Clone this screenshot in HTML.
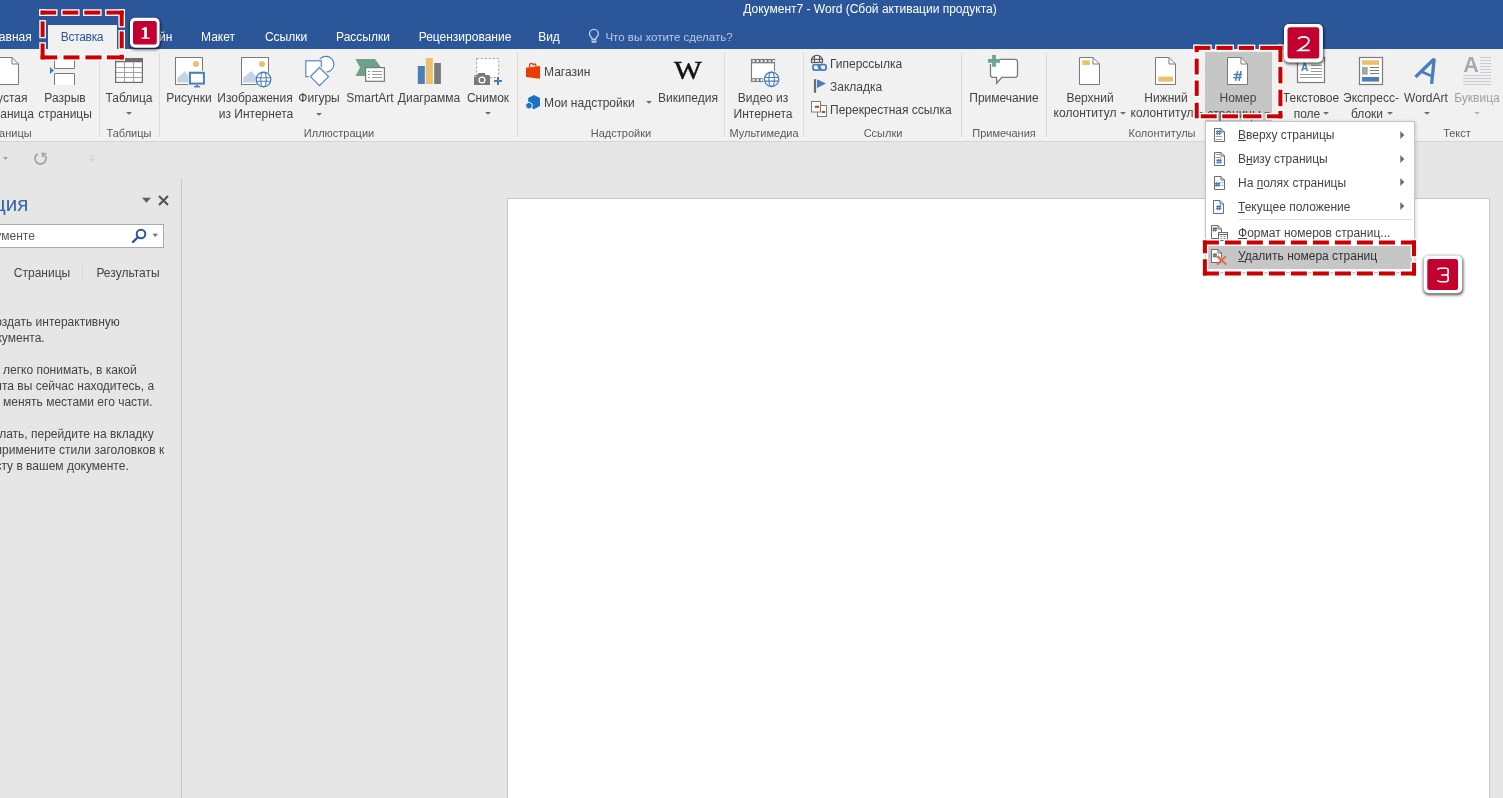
<!DOCTYPE html><html><head><meta charset="utf-8"><style>
html,body{margin:0;padding:0}
body{width:1503px;height:798px;overflow:hidden;position:relative;background:#E6E6E6;font-family:"Liberation Sans", sans-serif}
.t{position:absolute;white-space:nowrap;line-height:16px;will-change:transform}
.i{position:absolute;overflow:visible}
.r{position:absolute}
u{text-decoration:underline;text-decoration-thickness:1px;text-underline-offset:0.5px}
</style></head><body>
<div class="r" style="left:0px;top:0px;width:1503px;height:49px;background:#2B579A;"></div>
<div class="t" style="top:0.84px;font-size:12px;color:#FFFFFF;left:720.20px;width:300px;text-align:center;">Документ7 - Word (Сбой активации продукта)</div>
<div class="r" style="left:48px;top:25px;width:69px;height:24px;background:#F1F1F1;"></div>
<div class="t" style="top:28.84px;font-size:12px;color:#FFFFFF;right:1471.00px;">Главная</div>
<div class="t" style="top:28.84px;font-size:12px;color:#2B579A;left:-67.75px;width:300px;text-align:center;letter-spacing:-0.3px;">Вставка</div>
<div class="t" style="top:28.84px;font-size:12px;color:#FFFFFF;right:1330.70px;">Дизайн</div>
<div class="t" style="top:28.84px;font-size:12px;color:#FFFFFF;left:68.10px;width:300px;text-align:center;">Макет</div>
<div class="t" style="top:28.84px;font-size:12px;color:#FFFFFF;left:135.60px;width:300px;text-align:center;">Ссылки</div>
<div class="t" style="top:28.84px;font-size:12px;color:#FFFFFF;left:212.85px;width:300px;text-align:center;">Рассылки</div>
<div class="t" style="top:28.84px;font-size:12px;color:#FFFFFF;left:314.70px;width:300px;text-align:center;">Рецензирование</div>
<div class="t" style="top:28.84px;font-size:12px;color:#FFFFFF;left:399.25px;width:300px;text-align:center;">Вид</div>
<div class="t" style="top:29.02px;font-size:11.5px;color:#B9C8E0;left:518.70px;width:300px;text-align:center;">Что вы хотите сделать?</div>
<svg class="i" style="left:586px;top:28px;" width="16" height="16" viewBox="0 0 16 16"><path d="M6.2,11.3 C5.8,9.3 3.4,7.9 3.4,5.9 A4.5,4.5 0 0 1 12.4,5.9 C12.4,7.9 10,9.3 9.6,11.3 Z" fill="none" stroke="#B9C8E0" stroke-width="1.4"/><path d="M5.2,12.4 H10.8 L10.2,14.8 H5.8 Z" fill="#B9C8E0"/></svg>
<div class="r" style="left:0px;top:49px;width:1503px;height:92px;background:#F1F1F1;"></div>
<div class="r" style="left:0px;top:141px;width:1503px;height:1px;background:#D5D5D5;"></div>
<div class="r" style="left:99px;top:53px;width:1px;height:84px;background:#DADADA;"></div>
<div class="r" style="left:159px;top:53px;width:1px;height:84px;background:#DADADA;"></div>
<div class="r" style="left:517px;top:53px;width:1px;height:84px;background:#DADADA;"></div>
<div class="r" style="left:724px;top:53px;width:1px;height:84px;background:#DADADA;"></div>
<div class="r" style="left:803px;top:53px;width:1px;height:84px;background:#DADADA;"></div>
<div class="r" style="left:961px;top:53px;width:1px;height:84px;background:#DADADA;"></div>
<div class="r" style="left:1046px;top:53px;width:1px;height:84px;background:#DADADA;"></div>
<svg class="i" style="left:-6px;top:56px;" width="27" height="31" viewBox="0 0 27 31"><path d="M1.5,1.5 H18 L24.5,8 V28.5 H1.5 Z" fill="#fff" stroke="#7A7A7A"/><path d="M18,1.5 V8 H24.5" fill="none" stroke="#7A7A7A"/></svg>
<div class="t" style="top:89.84px;font-size:12px;color:#444444;left:-142.40px;width:300px;text-align:center;">Пустая</div>
<div class="t" style="top:105.84px;font-size:12px;color:#444444;left:-142.40px;width:300px;text-align:center;">страница</div>
<svg class="i" style="left:49px;top:52px;" width="28" height="35" viewBox="0 0 28 35"><path d="M5.5,7 V16.5 H25.5 V7" fill="#fff" stroke="#7A7A7A"/><path d="M5.5,33 V21.5 H25.5 V33" fill="#fff" stroke="#7A7A7A"/><path d="M0.9,14.9 L5.1,18.4 L0.9,21.9 Z" fill="#4A7EBB"/></svg>
<div class="t" style="top:89.84px;font-size:12px;color:#444444;left:-84.90px;width:300px;text-align:center;">Разрыв</div>
<div class="t" style="top:105.84px;font-size:12px;color:#444444;left:-84.90px;width:300px;text-align:center;">страницы</div>
<div class="t" style="top:125.19px;font-size:11px;color:#5A5A5A;right:1470.90px;">Страницы</div>
<svg class="i" style="left:115px;top:58px;" width="28" height="25" viewBox="0 0 28 25"><rect x="0.6" y="0.6" width="26.8" height="23.8" fill="#fff" stroke="#6D6D6D" stroke-width="1.2"/><rect x="0" y="0" width="28" height="4.3" fill="#6D6D6D"/><path d="M1,9.5 H27" stroke="#A3A3A3" stroke-width="1.1"/><path d="M1,14.5 H27" stroke="#A3A3A3" stroke-width="1.1"/><path d="M1,19.5 H27" stroke="#A3A3A3" stroke-width="1.1"/><path d="M9.5,4.3 V24" stroke="#A3A3A3" stroke-width="1.1"/><path d="M18.5,4.3 V24" stroke="#A3A3A3" stroke-width="1.1"/></svg>
<div class="t" style="top:89.84px;font-size:12px;color:#444444;left:-20.90px;width:300px;text-align:center;">Таблица</div>
<svg class="i" style="left:126.30000000000001px;top:112.0px;" width="6" height="4" viewBox="0 0 6 4"><path d="M0,0 L6,0 L3,2.70 Z" fill="#6D6D6D"/></svg>
<div class="t" style="top:125.19px;font-size:11px;color:#5A5A5A;left:-20.60px;width:300px;text-align:center;">Таблицы</div>
<svg class="i" style="left:175px;top:57px;" width="32" height="31" viewBox="0 0 32 31"><rect x="0.5" y="0.5" width="27" height="27" fill="#fff" stroke="#7A7A7A"/><path d="M2.2,25.6 V21.1 L10.1,14.1 L13,19 V25.6 Z" fill="#C3D4E8"/><circle cx="21" cy="6.9" r="3" fill="#EBC06D"/><rect x="13" y="13.8" width="18" height="15" fill="#F1F1F1"/><rect x="14.9" y="15.8" width="14" height="10.8" fill="#fff" stroke="#4A7EBB" stroke-width="2"/><rect x="19" y="29" width="6" height="1.4" fill="#4A7EBB"/><rect x="21" y="27.8" width="2" height="1.4" fill="#4A7EBB"/></svg>
<div class="t" style="top:89.84px;font-size:12px;color:#444444;left:39.05px;width:300px;text-align:center;">Рисунки</div>
<svg class="i" style="left:241px;top:57px;" width="34" height="32" viewBox="0 0 34 32"><rect x="0.5" y="0.5" width="27" height="27" fill="#fff" stroke="#7A7A7A"/><path d="M2.2,25.6 V21.1 L10.1,14.1 L15,19 V25.6 Z" fill="#C3D4E8"/><circle cx="21" cy="6.9" r="3" fill="#EBC06D"/><circle cx="22.5" cy="22.5" r="8.50" fill="#F1F1F1"/><circle cx="22.5" cy="22.5" r="7.3" fill="#fff" stroke="#4A7EBB" stroke-width="1.3"/><ellipse cx="22.5" cy="22.5" rx="2.77" ry="7.3" fill="none" stroke="#4A7EBB" stroke-width="1.1"/><path d="M15.2,20.68 H29.8 M15.2,24.32 H29.8" stroke="#4A7EBB" stroke-width="1.1"/></svg>
<div class="t" style="top:89.84px;font-size:12px;color:#444444;left:105.00px;width:300px;text-align:center;">Изображения</div>
<div class="t" style="top:105.84px;font-size:12px;color:#444444;left:105.60px;width:300px;text-align:center;">из Интернета</div>
<svg class="i" style="left:304px;top:55px;" width="32" height="34" viewBox="0 0 32 34"><circle cx="22" cy="9.3" r="7.9" fill="#fff" stroke="#4A7EBB" stroke-width="1.1"/><rect x="1.8" y="5.8" width="15.4" height="15.8" fill="#fff" stroke="#F1F1F1" stroke-width="3.2"/><rect x="1.8" y="5.8" width="15.4" height="15.8" fill="#fff" stroke="#4A7EBB" stroke-width="1.1"/><path d="M15.5,12.6 L24.5,21.6 L15.5,30.6 L6.5,21.6 Z" fill="#fff" stroke="#F1F1F1" stroke-width="3.2"/><path d="M15.5,12.6 L24.5,21.6 L15.5,30.6 L6.5,21.6 Z" fill="#fff" stroke="#4A7EBB" stroke-width="1.1"/></svg>
<div class="t" style="top:89.84px;font-size:12px;color:#444444;left:169.45px;width:300px;text-align:center;">Фигуры</div>
<svg class="i" style="left:316.3px;top:112.5px;" width="6" height="4" viewBox="0 0 6 4"><path d="M0,0 L6,0 L3,2.70 Z" fill="#6D6D6D"/></svg>
<svg class="i" style="left:355px;top:58px;" width="31" height="25" viewBox="0 0 31 25"><path d="M0.5,1 H20 L25.5,8.5 V18 H0.5 L5,9.5 Z" fill="#6DA28A"/><rect x="10.6" y="9.6" width="18.8" height="13.7" fill="#fff" stroke="#7A7A7A" stroke-width="1.2"/><path d="M13,13.5 h2 M17,13.5 h10 M13,16.5 h2 M17,16.5 h10 M13,19.5 h2 M17,19.5 h10" stroke="#9A9A9A" stroke-width="1"/></svg>
<div class="t" style="top:89.84px;font-size:12px;color:#444444;left:219.50px;width:300px;text-align:center;">SmartArt</div>
<svg class="i" style="left:417px;top:57px;" width="25" height="28" viewBox="0 0 25 28"><rect x="0.8" y="9" width="7" height="18" fill="#4A7EBB"/><rect x="8.8" y="1" width="7" height="26" fill="#EBC06D"/><rect x="17.2" y="6" width="6.7" height="21" fill="#7A7A7A"/></svg>
<div class="t" style="top:89.84px;font-size:12px;color:#444444;left:279.35px;width:300px;text-align:center;">Диаграмма</div>
<svg class="i" style="left:473px;top:57px;" width="31" height="29" viewBox="0 0 31 29"><rect x="3.7" y="1.5" width="22" height="19" fill="#fff" stroke="#A0A0A0" stroke-dasharray="2.2,1.8"/><path d="M1,19.5 Q1,18 2.5,18 H4.5 L5.3,16 H11.7 L12.5,18 H15.5 Q17,18 17,19.5 V28 H1 Z" fill="#7A7A7A"/><circle cx="9" cy="23" r="2.9" fill="none" stroke="#fff" stroke-width="1.3"/><circle cx="2.6" cy="19.6" r="0.7" fill="#fff"/><path d="M21,24 H29 M25,20 V28" stroke="#4A7EBB" stroke-width="2"/></svg>
<div class="t" style="top:89.84px;font-size:12px;color:#444444;left:338.35px;width:300px;text-align:center;">Снимок</div>
<svg class="i" style="left:485.4px;top:111.5px;" width="6" height="4" viewBox="0 0 6 4"><path d="M0,0 L6,0 L3,2.70 Z" fill="#6D6D6D"/></svg>
<div class="t" style="top:125.19px;font-size:11px;color:#5A5A5A;left:188.50px;width:300px;text-align:center;">Иллюстрации</div>
<svg class="i" style="left:525px;top:62px;" width="17" height="18" viewBox="0 0 17 18"><path d="M1,5.8 L15,4 V16.7 L1,15 Z" fill="#EB3C00"/><path d="M4.6,5.4 V3.2 Q4.6,1.3 6.4,1.3 Q8.1,1.3 8.1,3.2 Q8.1,2 9.5,2 Q10.9,2 10.9,3.8 V4.8" fill="none" stroke="#EB3C00" stroke-width="1.3"/></svg>
<div class="t" style="top:63.84px;font-size:12px;color:#444444;left:544.10px;">Магазин</div>
<svg class="i" style="left:525px;top:94px;" width="17" height="17" viewBox="0 0 17 17"><path d="M3.2,4 L9,0.9 L15,4 V12 L9,15.2 L3.2,12 Z" fill="#1B72C4"/><path d="M4,8.1 L7.2,9.9 V13.4 L4,15.2 L0.8,13.4 V9.9 Z" fill="#1B72C4" stroke="#F1F1F1" stroke-width="1"/></svg>
<div class="t" style="top:94.84px;font-size:12px;color:#444444;left:544.10px;">Мои надстройки</div>
<svg class="i" style="left:645.5px;top:100.5px;" width="6" height="4" viewBox="0 0 6 4"><path d="M0,0 L6,0 L3,2.70 Z" fill="#6D6D6D"/></svg>
<div class="t" style="left:674px;top:55.5px;font-family:'Liberation Serif',serif;font-size:26px;line-height:30px;color:#111;-webkit-text-stroke:0.5px #111;transform:scaleX(1.13);transform-origin:0 0">W</div>
<div class="t" style="top:89.84px;font-size:12px;color:#444444;left:537.65px;width:300px;text-align:center;">Википедия</div>
<div class="t" style="top:125.19px;font-size:11px;color:#5A5A5A;left:471.15px;width:300px;text-align:center;">Надстройки</div>
<svg class="i" style="left:750px;top:57px;" width="34" height="33" viewBox="0 0 34 33"><rect x="1.5" y="2.5" width="23" height="22" fill="#fff" stroke="#7A7A7A" stroke-width="1.1"/><rect x="1" y="2" width="24" height="4.3" fill="#7A7A7A"/><rect x="1" y="21.2" width="24" height="3.8" fill="#7A7A7A"/><rect x="2.6" y="3.1" width="2" height="2" fill="#fff"/><rect x="2.6" y="22.1" width="2" height="2" fill="#fff"/><rect x="6.6" y="3.1" width="2" height="2" fill="#fff"/><rect x="6.6" y="22.1" width="2" height="2" fill="#fff"/><rect x="10.6" y="3.1" width="2" height="2" fill="#fff"/><rect x="10.6" y="22.1" width="2" height="2" fill="#fff"/><rect x="14.6" y="3.1" width="2" height="2" fill="#fff"/><rect x="14.6" y="22.1" width="2" height="2" fill="#fff"/><rect x="18.6" y="3.1" width="2" height="2" fill="#fff"/><rect x="18.6" y="22.1" width="2" height="2" fill="#fff"/><rect x="22.6" y="3.1" width="2" height="2" fill="#fff"/><rect x="22.6" y="22.1" width="2" height="2" fill="#fff"/><circle cx="21.6" cy="22.3" r="8.6" fill="#F1F1F1"/><circle cx="21.6" cy="22.3" r="8.40" fill="#F1F1F1"/><circle cx="21.6" cy="22.3" r="7.2" fill="#fff" stroke="#4A7EBB" stroke-width="1.3"/><ellipse cx="21.6" cy="22.3" rx="2.74" ry="7.2" fill="none" stroke="#4A7EBB" stroke-width="1.1"/><path d="M14.400000000000002,20.50 H28.8 M14.400000000000002,24.10 H28.8" stroke="#4A7EBB" stroke-width="1.1"/></svg>
<div class="t" style="top:89.84px;font-size:12px;color:#444444;left:613.15px;width:300px;text-align:center;">Видео из</div>
<div class="t" style="top:105.84px;font-size:12px;color:#444444;left:612.95px;width:300px;text-align:center;">Интернета</div>
<div class="t" style="top:125.19px;font-size:11px;color:#5A5A5A;left:614.15px;width:300px;text-align:center;">Мультимедиа</div>
<svg class="i" style="left:810px;top:54px;" width="19" height="19" viewBox="0 0 19 19"><circle cx="7" cy="6.9" r="5.6" fill="#fff" stroke="#5F5F5F" stroke-width="1.3"/><path d="M4.5,1.8 V9.5 M9.5,1.8 V9.5 M1.6,5.3 H12.4 M1.4,8.3 H12.6" stroke="#5F5F5F" stroke-width="1.2"/><rect x="0.8" y="9.3" width="17.5" height="9" fill="#F1F1F1"/><rect x="2.9" y="10.7" width="6.9" height="5.4" rx="2" fill="none" stroke="#4A7EBB" stroke-width="1.8"/><rect x="9.2" y="10.7" width="6.9" height="5.4" rx="2" fill="none" stroke="#4A7EBB" stroke-width="1.8"/><path d="M7.5,11.5 L11.5,15.3" stroke="#4A7EBB" stroke-width="1.8"/></svg>
<div class="t" style="top:55.84px;font-size:12px;color:#444444;left:830.00px;">Гиперссылка</div>
<svg class="i" style="left:812px;top:78px;" width="16" height="16" viewBox="0 0 16 16"><rect x="1.9" y="1.2" width="2.2" height="13.6" fill="#6D6D6D"/><path d="M5,1.2 L14,5.6 L5,10 Z" fill="#4A7EBB"/></svg>
<div class="t" style="top:78.84px;font-size:12px;color:#444444;left:830.00px;">Закладка</div>
<svg class="i" style="left:810px;top:100px;" width="18" height="18" viewBox="0 0 18 18"><rect x="7.5" y="5.5" width="9" height="11" fill="#fff" stroke="#7A7A7A"/><rect x="1.5" y="1.5" width="9" height="10.5" fill="#fff" stroke="#7A7A7A"/><rect x="4.8" y="5.8" width="4.2" height="2" fill="#D83B01"/><rect x="11.8" y="11" width="3.3" height="2" fill="#D83B01"/></svg>
<div class="t" style="top:101.84px;font-size:12px;color:#444444;left:830.00px;">Перекрестная ссылка</div>
<div class="t" style="top:125.19px;font-size:11px;color:#5A5A5A;left:732.70px;width:300px;text-align:center;">Ссылки</div>
<svg class="i" style="left:986px;top:54px;" width="34" height="31" viewBox="0 0 34 31"><path d="M4.5,9 V20.8 Q4.5,23.3 7,23.3 H10.6 V29.3 L15.9,23.3 H29 Q31.5,23.3 31.5,20.8 V7.8 Q31.5,5.3 29,5.3 H13" fill="#fff" stroke="#7A7A7A" stroke-width="1.3"/><path d="M2,6.9 H14 M8,1 V12.8" stroke="#F1F1F1" stroke-width="6"/><path d="M2,6.9 H14 M8,1 V12.8" stroke="#6DA592" stroke-width="3.8"/></svg>
<div class="t" style="top:89.84px;font-size:12px;color:#444444;left:853.80px;width:300px;text-align:center;">Примечание</div>
<div class="t" style="top:125.19px;font-size:11px;color:#5A5A5A;left:853.50px;width:300px;text-align:center;">Примечания</div>
<svg class="i" style="left:1079px;top:57px;" width="21" height="28" viewBox="0 0 21 28"><path d="M0.5,0.5 H14.0 L20.5,7.0 V27.5 H0.5 Z" fill="#fff" stroke="#7A7A7A"/><path d="M14.0,0.5 V7.0 H20.5" fill="none" stroke="#7A7A7A"/><rect x="3.3" y="3.3" width="7.5" height="4.7" fill="#EBC06D"/></svg>
<div class="t" style="top:89.84px;font-size:12px;color:#444444;left:939.60px;width:300px;text-align:center;">Верхний</div>
<div class="t" style="top:104.84px;font-size:12px;color:#444444;left:935.10px;width:300px;text-align:center;">колонтитул</div>
<svg class="i" style="left:1119.7px;top:112.0px;" width="6" height="4" viewBox="0 0 6 4"><path d="M0,0 L6,0 L3,2.70 Z" fill="#6D6D6D"/></svg>
<svg class="i" style="left:1155px;top:57px;" width="21" height="28" viewBox="0 0 21 28"><path d="M0.5,0.5 H14.0 L20.5,7.0 V27.5 H0.5 Z" fill="#fff" stroke="#7A7A7A"/><path d="M14.0,0.5 V7.0 H20.5" fill="none" stroke="#7A7A7A"/><rect x="3.3" y="19.6" width="14.7" height="5" fill="#EBC06D"/></svg>
<div class="t" style="top:89.84px;font-size:12px;color:#444444;left:1016.10px;width:300px;text-align:center;">Нижний</div>
<div class="t" style="top:104.84px;font-size:12px;color:#444444;left:1012.10px;width:300px;text-align:center;">колонтитул</div>
<svg class="i" style="left:1196.5px;top:112.0px;" width="6" height="4" viewBox="0 0 6 4"><path d="M0,0 L6,0 L3,2.70 Z" fill="#6D6D6D"/></svg>
<div class="t" style="top:125.19px;font-size:11px;color:#5A5A5A;left:1011.85px;width:300px;text-align:center;">Колонтитулы</div>
<div class="r" style="left:1205px;top:52px;width:67px;height:69px;background:#C6C6C6;"></div>
<svg class="i" style="left:1227px;top:57px;" width="21" height="28" viewBox="0 0 21 28"><path d="M0.5,0.5 H14.0 L20.5,7.0 V27.5 H0.5 Z" fill="#fff" stroke="#7A7A7A"/><path d="M14.0,0.5 V7.0 H20.5" fill="none" stroke="#7A7A7A"/><path d="M10.6,14 L8.6,23.8 M14,14 L12,23.8 M6.6,17.4 H15 M6.2,20.6 H14.6" stroke="#4A7EBB" stroke-width="1.45" fill="none"/></svg>
<div class="t" style="top:89.84px;font-size:12px;color:#444444;left:1087.90px;width:300px;text-align:center;">Номер</div>
<div class="t" style="top:105.84px;font-size:12px;color:#444444;left:1084.00px;width:300px;text-align:center;">страницы</div>
<svg class="i" style="left:1264px;top:112.0px;" width="6" height="4" viewBox="0 0 6 4"><path d="M0,0 L6,0 L3,2.70 Z" fill="#6D6D6D"/></svg>
<svg class="i" style="left:1297px;top:57px;" width="28" height="26" viewBox="0 0 28 26"><rect x="0.5" y="0.5" width="27" height="25" fill="#fff" stroke="#7A7A7A" stroke-width="1.2"/><text x="3.8" y="13.9" font-family="Liberation Sans" font-weight="bold" font-size="10.5" fill="#4A7EBB">A</text><path d="M14,8.4 H25 M14,11.5 H25 M14,14.5 H25 M3,17.5 H25 M3,20.5 H25" stroke="#9A9A9A" stroke-width="1.2"/></svg>
<div class="t" style="top:89.84px;font-size:12px;color:#444444;left:1160.90px;width:300px;text-align:center;">Текстовое</div>
<div class="t" style="top:105.84px;font-size:12px;color:#444444;left:1156.65px;width:300px;text-align:center;">поле</div>
<svg class="i" style="left:1322.5px;top:112.0px;" width="6" height="4" viewBox="0 0 6 4"><path d="M0,0 L6,0 L3,2.70 Z" fill="#6D6D6D"/></svg>
<svg class="i" style="left:1359px;top:57px;" width="24" height="28" viewBox="0 0 24 28"><rect x="0.5" y="0.5" width="23" height="27" fill="#fff" stroke="#7A7A7A" stroke-width="1.2"/><rect x="3" y="3.2" width="17" height="4.6" fill="#EBC06D"/><rect x="3" y="10" width="5.7" height="7.7" fill="#A6A6A6"/><path d="M11,10.5 H20 M11,13.5 H20 M11,16.5 H20" stroke="#7A7A7A"/><rect x="3" y="20" width="17" height="4.6" fill="#4A7EBB"/></svg>
<div class="t" style="top:89.84px;font-size:12px;color:#444444;left:1220.70px;width:300px;text-align:center;">Экспресс-</div>
<div class="t" style="top:105.84px;font-size:12px;color:#444444;left:1217.00px;width:300px;text-align:center;">блоки</div>
<svg class="i" style="left:1386.5px;top:112.0px;" width="6" height="4" viewBox="0 0 6 4"><path d="M0,0 L6,0 L3,2.70 Z" fill="#6D6D6D"/></svg>
<svg class="i" style="left:1413px;top:57px;" width="24" height="28" viewBox="0 0 24 28"><path d="M2.5,20 L20,3 L21.2,2.2 L18.6,26.8" fill="none" stroke="#4A7EBB" stroke-width="3.3" stroke-linejoin="bevel"/><path d="M9.3,14.9 L19.2,19.3" stroke="#4A7EBB" stroke-width="2.7"/></svg>
<div class="t" style="top:89.84px;font-size:12px;color:#444444;left:1276.35px;width:300px;text-align:center;">WordArt</div>
<svg class="i" style="left:1423.5px;top:112.0px;" width="6" height="4" viewBox="0 0 6 4"><path d="M0,0 L6,0 L3,2.70 Z" fill="#6D6D6D"/></svg>
<svg class="i" style="left:1462px;top:56px;" width="30" height="30" viewBox="0 0 30 30"><text x="1.2" y="16" font-family="Liberation Sans" font-weight="bold" font-size="21.5" fill="#A9A9AC">A</text><path d="M18,1.5 H29 M18,4.5 H29 M18,7.5 H29 M18,10.5 H29 M18,13.5 H29 M18,16.5 H29 M1,19.5 H29 M1,22.5 H29 M1,25.5 H29 M1,28.5 H29" stroke="#CBCACD"/></svg>
<div class="t" style="top:89.84px;font-size:12px;color:#A0A0A0;left:1326.55px;width:300px;text-align:center;">Буквица</div>
<svg class="i" style="left:1473.5px;top:112.0px;" width="6" height="4" viewBox="0 0 6 4"><path d="M0,0 L6,0 L3,2.70 Z" fill="#B5B5B5"/></svg>
<div class="t" style="top:125.19px;font-size:11px;color:#5A5A5A;left:1307.00px;width:300px;text-align:center;">Текст</div>
<svg class="i" style="left:3px;top:157px;" width="6" height="4" viewBox="0 0 6 4"><path d="M0,0 H5 L2.5,3 Z" fill="#A0A0A0"/></svg>
<svg class="i" style="left:33px;top:151px;" width="16" height="16" viewBox="0 0 16 16"><path d="M4.75,2.74 A5.5,5.5 0 1 0 12.26,4.75" fill="none" stroke="#A6A6A6" stroke-width="1.9"/><path d="M8.1,1.2 L14,2.2 L9.5,6.7 Z" fill="#A6A6A6"/></svg>
<svg class="i" style="left:88px;top:155px;" width="8" height="8" viewBox="0 0 8 8"><path d="M1,1 H7" stroke="#D0D0D0" stroke-width="1.2"/><path d="M1,3.5 H7 L4,6.5 Z" fill="#D0D0D0"/></svg>
<div class="r" style="left:181px;top:179px;width:1px;height:619px;background:#C6C6C6;"></div>
<div class="t" style="right:1475.2px;top:190.9px;font-size:20.5px;line-height:26px;color:#3564A8">Навигация</div>
<svg class="i" style="left:141px;top:197px;" width="11" height="7" viewBox="0 0 11 7"><path d="M1,0.8 H10 L5.5,5.8 Z" fill="#606060"/></svg>
<svg class="i" style="left:157px;top:194px;" width="13" height="13" viewBox="0 0 13 13"><path d="M2,2 L11,11 M11,2 L2,11" stroke="#505050" stroke-width="2"/></svg>
<div class="r" style="left:-2px;top:224px;width:163.5px;height:22px;background:#FFFFFF;border:1px solid #ABABAB;"></div>
<div class="t" style="top:227.84px;font-size:12px;color:#555555;right:1468.50px;">Поиск в документе</div>
<svg class="i" style="left:131px;top:228px;" width="17" height="16" viewBox="0 0 17 16"><circle cx="10" cy="6" r="4.3" fill="none" stroke="#2B579A" stroke-width="2"/><path d="M7,9 L2,14" stroke="#2B579A" stroke-width="2.4" stroke-linecap="round"/></svg>
<svg class="i" style="left:152px;top:233px;" width="7" height="5" viewBox="0 0 7 5"><path d="M0.5,0.8 H6 L3.25,4 Z" fill="#707070"/></svg>
<div class="t" style="top:264.84px;font-size:12px;color:#444444;right:1512.40px;">Заголовки</div>
<div class="t" style="top:264.84px;font-size:12px;color:#444444;left:-108.05px;width:300px;text-align:center;">Страницы</div>
<div class="r" style="left:82px;top:262px;width:1px;height:20px;background:#D8D8D8;"></div>
<div class="t" style="top:264.84px;font-size:12px;color:#444444;left:-22.10px;width:300px;text-align:center;">Результаты</div>
<div class="t" style="top:313.84px;font-size:12px;color:#444444;right:1383.60px;">С помощью этой области можно создать интерактивную</div>
<div class="t" style="top:329.84px;font-size:12px;color:#444444;right:1458.80px;">структуру документа.</div>
<div class="t" style="top:361.84px;font-size:12px;color:#444444;right:1366.10px;">легко понимать, в какой</div>
<div class="t" style="top:377.84px;font-size:12px;color:#444444;right:1348.60px;">части документа вы сейчас находитесь, а</div>
<div class="t" style="top:393.84px;font-size:12px;color:#444444;right:1349.90px;">также быстро менять местами его части.</div>
<div class="t" style="top:425.84px;font-size:12px;color:#444444;right:1349.10px;">Чтобы сделать, перейдите на вкладку</div>
<div class="t" style="top:441.84px;font-size:12px;color:#444444;right:1338.90px;">"Главная" и примените стили заголовков к</div>
<div class="t" style="top:457.84px;font-size:12px;color:#444444;right:1374.40px;">тексту в вашем документе.</div>
<div class="r" style="left:507px;top:198px;width:983px;height:620px;background:#FFFFFF;box-sizing:border-box;border:1px solid #C6C6C6;"></div>
<div class="r" style="left:1205px;top:121px;width:210px;height:152px;background:#FFFFFF;box-sizing:border-box;border:1px solid #C6C6C6;box-shadow:1px 1px 4px rgba(0,0,0,0.13),0 0 3px rgba(0,0,0,0.07);"></div>
<div class="t" style="top:126.84px;font-size:12px;color:#444444;left:1238.10px;"><u>В</u>верху страницы</div>
<svg class="i" style="left:1400px;top:130.9px;" width="6" height="8" viewBox="0 0 6 8"><path d="M0.3,0 L4.3,4 L0.3,8 Z" fill="#6A6A6A"/></svg>
<div class="t" style="top:150.84px;font-size:12px;color:#444444;left:1238.10px;">В<u>н</u>изу страницы</div>
<svg class="i" style="left:1400px;top:154.6px;" width="6" height="8" viewBox="0 0 6 8"><path d="M0.3,0 L4.3,4 L0.3,8 Z" fill="#6A6A6A"/></svg>
<div class="t" style="top:174.84px;font-size:12px;color:#444444;left:1238.10px;">На <u>п</u>олях страницы</div>
<svg class="i" style="left:1400px;top:178.3px;" width="6" height="8" viewBox="0 0 6 8"><path d="M0.3,0 L4.3,4 L0.3,8 Z" fill="#6A6A6A"/></svg>
<div class="t" style="top:198.84px;font-size:12px;color:#444444;left:1238.10px;"><u>Т</u>екущее положение</div>
<svg class="i" style="left:1400px;top:202.4px;" width="6" height="8" viewBox="0 0 6 8"><path d="M0.3,0 L4.3,4 L0.3,8 Z" fill="#6A6A6A"/></svg>
<div class="r" style="left:1239px;top:219px;width:174px;height:1px;background:#E1E1E1;"></div>
<div class="r" style="left:1208px;top:246px;width:204px;height:23px;background:#C6C6C6;"></div>
<div class="t" style="top:224.84px;font-size:12px;color:#444444;left:1238.10px;"><u>Ф</u>ормат номеров страниц...</div>
<div class="t" style="top:247.84px;font-size:12px;color:#333;left:1238.10px;"><u>У</u>далить номера страниц</div>
<svg class="i" style="left:1214px;top:128px;" width="12" height="15" viewBox="0 0 12 15"><path d="M0.5,0.5 H7 L10.5,4 V13.5 H0.5 Z" fill="#fff" stroke="#6D6D6D"/><path d="M7,0.5 V4 H10.5" fill="none" stroke="#6D6D6D"/><path d="M3.82,2.00 L3.22,7.00 M6.09,2.00 L5.49,7.00 M1.90,3.60 H7.30 M1.90,5.50 H7.30" stroke="#4A7EBB" stroke-width="1.2" fill="none"/><path d="M1.8,8.5 H8 M1.8,11.5 H8" stroke="#A0A0A0"/></svg>
<svg class="i" style="left:1214px;top:152px;" width="12" height="15" viewBox="0 0 12 15"><path d="M0.5,0.5 H7 L10.5,4 V13.5 H0.5 Z" fill="#fff" stroke="#6D6D6D"/><path d="M7,0.5 V4 H10.5" fill="none" stroke="#6D6D6D"/><path d="M1.6,2.5 H6 M1.6,5.5 H7.4" stroke="#A0A0A0"/><path d="M4.25,6.80 L3.65,11.70 M6.56,6.80 L5.96,11.70 M2.30,8.37 H7.80 M2.30,10.23 H7.80" stroke="#4A7EBB" stroke-width="1.2" fill="none"/></svg>
<svg class="i" style="left:1214px;top:176px;" width="12" height="15" viewBox="0 0 12 15"><path d="M0.5,0.5 H7 L10.5,4 V13.5 H0.5 Z" fill="#fff" stroke="#6D6D6D"/><path d="M7,0.5 V4 H10.5" fill="none" stroke="#6D6D6D"/><path d="M2.92,6.00 L2.32,10.80 M5.19,6.00 L4.59,10.80 M1.00,7.54 H6.40 M1.00,9.36 H6.40" stroke="#4A7EBB" stroke-width="1.2" fill="none"/><path d="M7.5,6.5 H9.6 M7.5,9.5 H9.6" stroke="#A0A0A0"/></svg>
<svg class="i" style="left:1213px;top:200px;" width="12" height="15" viewBox="0 0 12 15"><path d="M0.5,0.5 H7 L10.5,4 V13.5 H0.5 Z" fill="#fff" stroke="#6D6D6D"/><path d="M7,0.5 V4 H10.5" fill="none" stroke="#6D6D6D"/><path d="M5.03,5.00 L4.43,10.10 M7.17,5.00 L6.57,10.10 M3.20,6.63 H8.30 M3.20,8.57 H8.30" stroke="#4A7EBB" stroke-width="1.2" fill="none"/></svg>
<svg class="i" style="left:1211px;top:225px;" width="18" height="16" viewBox="0 0 18 16"><path d="M0.5,0.5 H7 L10.5,4 V13.5 H0.5 Z" fill="#fff" stroke="#6D6D6D"/><path d="M7,0.5 V4 H10.5" fill="none" stroke="#6D6D6D"/><path d="M3.15,2.00 L2.55,6.50 M5.04,2.00 L4.44,6.50 M1.50,3.44 H6.00 M1.50,5.15 H6.00" stroke="#6D6D6D" stroke-width="1.1" fill="none"/><rect x="7.5" y="7.5" width="9" height="8" fill="#fff" stroke="#6D6D6D"/><path d="M7.5,9.5 H16.5" stroke="#6D6D6D" stroke-width="1.2"/><path d="M9.5,11.5 h1.5 M12.5,11.5 h2 M9.5,13.5 h1.5 M12.5,13.5 h2" stroke="#8A8A8A"/></svg>
<svg class="i" style="left:1211px;top:249px;" width="18" height="18" viewBox="0 0 18 18"><path d="M0.5,0.5 H7 L10.5,4 V13.5 H0.5 Z" fill="#fff" stroke="#6D6D6D"/><path d="M7,0.5 V4 H10.5" fill="none" stroke="#6D6D6D"/><path d="M3.36,4.20 L2.76,8.40 M5.12,4.20 L4.52,8.40 M1.80,5.54 H6.00 M1.80,7.14 H6.00" stroke="#6D6D6D" stroke-width="1.1" fill="none"/><path d="M6.2,7.2 L15.2,15.5" stroke="#C6C6C6" stroke-width="3.4"/><path d="M6.2,15.5 Q10,11.5 14.8,7.4 M6.4,7.4 Q11,11.5 15.2,15.5" stroke="#E06A3B" stroke-width="1.9" fill="none"/></svg>
<svg class="i" style="left:0;top:0" width="1503" height="798" viewBox="0 0 1503 798"><rect x="39.30" y="9.30" width="18.20" height="6.60" fill="#fff"/><rect x="61.20" y="9.30" width="18.40" height="6.60" fill="#fff"/><rect x="83.00" y="9.30" width="18.60" height="6.60" fill="#fff"/><rect x="105.10" y="9.30" width="19.90" height="6.60" fill="#fff"/><rect x="39.30" y="54.10" width="19.30" height="6.60" fill="#fff"/><rect x="62.20" y="54.10" width="18.60" height="6.60" fill="#fff"/><rect x="84.10" y="54.10" width="18.80" height="6.60" fill="#fff"/><rect x="105.50" y="54.10" width="19.50" height="6.60" fill="#fff"/><rect x="39.30" y="9.30" width="6.60" height="6.50" fill="#fff"/><rect x="39.30" y="20.10" width="6.60" height="18.20" fill="#fff"/><rect x="39.30" y="42.20" width="6.60" height="18.50" fill="#fff"/><rect x="118.40" y="9.30" width="6.60" height="18.20" fill="#fff"/><rect x="118.40" y="30.10" width="6.60" height="19.50" fill="#fff"/><rect x="118.40" y="53.40" width="6.60" height="7.30" fill="#fff"/><rect x="40.60" y="10.60" width="15.60" height="4.00" fill="#CC0000"/><rect x="62.50" y="10.60" width="15.80" height="4.00" fill="#CC0000"/><rect x="84.30" y="10.60" width="16.00" height="4.00" fill="#CC0000"/><rect x="106.40" y="10.60" width="17.30" height="4.00" fill="#CC0000"/><rect x="40.60" y="55.40" width="16.70" height="4.00" fill="#CC0000"/><rect x="63.50" y="55.40" width="16.00" height="4.00" fill="#CC0000"/><rect x="85.40" y="55.40" width="16.20" height="4.00" fill="#CC0000"/><rect x="106.80" y="55.40" width="16.90" height="4.00" fill="#CC0000"/><rect x="40.60" y="10.60" width="4.00" height="3.90" fill="#CC0000"/><rect x="40.60" y="21.40" width="4.00" height="15.60" fill="#CC0000"/><rect x="40.60" y="43.50" width="4.00" height="15.90" fill="#CC0000"/><rect x="119.70" y="10.60" width="4.00" height="15.60" fill="#CC0000"/><rect x="119.70" y="31.40" width="4.00" height="16.90" fill="#CC0000"/><rect x="119.70" y="54.70" width="4.00" height="4.70" fill="#CC0000"/><rect x="1193.40" y="44.60" width="18.40" height="6.60" fill="#fff"/><rect x="1215.10" y="44.60" width="18.80" height="6.60" fill="#fff"/><rect x="1237.50" y="44.60" width="17.80" height="6.60" fill="#fff"/><rect x="1258.90" y="44.60" width="24.80" height="6.60" fill="#fff"/><rect x="1199.50" y="113.00" width="18.50" height="6.60" fill="#fff"/><rect x="1220.90" y="113.00" width="18.50" height="6.60" fill="#fff"/><rect x="1241.60" y="113.00" width="21.20" height="6.60" fill="#fff"/><rect x="1265.70" y="113.00" width="18.00" height="6.60" fill="#fff"/><rect x="1193.40" y="44.60" width="6.60" height="8.90" fill="#fff"/><rect x="1193.40" y="57.30" width="6.60" height="18.50" fill="#fff"/><rect x="1193.40" y="79.20" width="6.60" height="18.00" fill="#fff"/><rect x="1193.40" y="101.50" width="6.60" height="18.10" fill="#fff"/><rect x="1277.10" y="44.60" width="6.60" height="18.70" fill="#fff"/><rect x="1277.10" y="65.60" width="6.60" height="19.10" fill="#fff"/><rect x="1277.10" y="88.40" width="6.60" height="19.10" fill="#fff"/><rect x="1277.10" y="109.70" width="6.60" height="9.90" fill="#fff"/><rect x="1194.70" y="45.90" width="15.80" height="4.00" fill="#CC0000"/><rect x="1216.40" y="45.90" width="16.20" height="4.00" fill="#CC0000"/><rect x="1238.80" y="45.90" width="15.20" height="4.00" fill="#CC0000"/><rect x="1260.20" y="45.90" width="22.20" height="4.00" fill="#CC0000"/><rect x="1200.80" y="114.30" width="15.90" height="4.00" fill="#CC0000"/><rect x="1222.20" y="114.30" width="15.90" height="4.00" fill="#CC0000"/><rect x="1242.90" y="114.30" width="18.60" height="4.00" fill="#CC0000"/><rect x="1267.00" y="114.30" width="15.40" height="4.00" fill="#CC0000"/><rect x="1194.70" y="45.90" width="4.00" height="6.30" fill="#CC0000"/><rect x="1194.70" y="58.60" width="4.00" height="15.90" fill="#CC0000"/><rect x="1194.70" y="80.50" width="4.00" height="15.40" fill="#CC0000"/><rect x="1194.70" y="102.80" width="4.00" height="15.50" fill="#CC0000"/><rect x="1278.40" y="45.90" width="4.00" height="16.10" fill="#CC0000"/><rect x="1278.40" y="66.90" width="4.00" height="16.50" fill="#CC0000"/><rect x="1278.40" y="89.70" width="4.00" height="16.50" fill="#CC0000"/><rect x="1278.40" y="111.00" width="4.00" height="7.30" fill="#CC0000"/><rect x="1201.60" y="239.20" width="18.60" height="6.60" fill="#fff"/><rect x="1223.60" y="239.20" width="18.60" height="6.60" fill="#fff"/><rect x="1245.60" y="239.20" width="18.60" height="6.60" fill="#fff"/><rect x="1267.60" y="239.20" width="18.60" height="6.60" fill="#fff"/><rect x="1289.60" y="239.20" width="18.60" height="6.60" fill="#fff"/><rect x="1311.60" y="239.20" width="18.60" height="6.60" fill="#fff"/><rect x="1333.60" y="239.20" width="18.60" height="6.60" fill="#fff"/><rect x="1355.60" y="239.20" width="18.60" height="6.60" fill="#fff"/><rect x="1377.60" y="239.20" width="18.60" height="6.60" fill="#fff"/><rect x="1399.60" y="239.20" width="17.70" height="6.60" fill="#fff"/><rect x="1201.60" y="270.20" width="18.60" height="6.60" fill="#fff"/><rect x="1223.60" y="270.20" width="18.60" height="6.60" fill="#fff"/><rect x="1245.60" y="270.20" width="18.60" height="6.60" fill="#fff"/><rect x="1267.60" y="270.20" width="18.60" height="6.60" fill="#fff"/><rect x="1289.60" y="270.20" width="18.60" height="6.60" fill="#fff"/><rect x="1311.60" y="270.20" width="18.60" height="6.60" fill="#fff"/><rect x="1333.60" y="270.20" width="18.60" height="6.60" fill="#fff"/><rect x="1355.60" y="270.20" width="18.60" height="6.60" fill="#fff"/><rect x="1377.60" y="270.20" width="18.60" height="6.60" fill="#fff"/><rect x="1399.60" y="270.20" width="17.70" height="6.60" fill="#fff"/><rect x="1201.60" y="239.20" width="6.60" height="15.40" fill="#fff"/><rect x="1201.60" y="257.90" width="6.60" height="18.90" fill="#fff"/><rect x="1410.70" y="239.20" width="6.60" height="18.30" fill="#fff"/><rect x="1410.70" y="261.40" width="6.60" height="15.40" fill="#fff"/><rect x="1202.90" y="240.50" width="16.00" height="4.00" fill="#CC0000"/><rect x="1224.90" y="240.50" width="16.00" height="4.00" fill="#CC0000"/><rect x="1246.90" y="240.50" width="16.00" height="4.00" fill="#CC0000"/><rect x="1268.90" y="240.50" width="16.00" height="4.00" fill="#CC0000"/><rect x="1290.90" y="240.50" width="16.00" height="4.00" fill="#CC0000"/><rect x="1312.90" y="240.50" width="16.00" height="4.00" fill="#CC0000"/><rect x="1334.90" y="240.50" width="16.00" height="4.00" fill="#CC0000"/><rect x="1356.90" y="240.50" width="16.00" height="4.00" fill="#CC0000"/><rect x="1378.90" y="240.50" width="16.00" height="4.00" fill="#CC0000"/><rect x="1400.90" y="240.50" width="15.10" height="4.00" fill="#CC0000"/><rect x="1202.90" y="271.50" width="16.00" height="4.00" fill="#CC0000"/><rect x="1224.90" y="271.50" width="16.00" height="4.00" fill="#CC0000"/><rect x="1246.90" y="271.50" width="16.00" height="4.00" fill="#CC0000"/><rect x="1268.90" y="271.50" width="16.00" height="4.00" fill="#CC0000"/><rect x="1290.90" y="271.50" width="16.00" height="4.00" fill="#CC0000"/><rect x="1312.90" y="271.50" width="16.00" height="4.00" fill="#CC0000"/><rect x="1334.90" y="271.50" width="16.00" height="4.00" fill="#CC0000"/><rect x="1356.90" y="271.50" width="16.00" height="4.00" fill="#CC0000"/><rect x="1378.90" y="271.50" width="16.00" height="4.00" fill="#CC0000"/><rect x="1400.90" y="271.50" width="15.10" height="4.00" fill="#CC0000"/><rect x="1202.90" y="240.50" width="4.00" height="12.80" fill="#CC0000"/><rect x="1202.90" y="259.20" width="4.00" height="16.30" fill="#CC0000"/><rect x="1412.00" y="240.50" width="4.00" height="15.70" fill="#CC0000"/><rect x="1412.00" y="262.70" width="4.00" height="12.80" fill="#CC0000"/><defs><filter id="blur" x="-30%" y="-30%" width="160%" height="160%"><feGaussianBlur stdDeviation="1.6"/></filter></defs><rect x="129.80" y="18.40" width="30.80" height="31.20" rx="5.5" fill="rgba(0,0,0,0.7)" filter="url(#blur)"/><rect x="130.00" y="17.80" width="29.60" height="30.00" rx="5" fill="#fff"/><rect x="133.00" y="21.00" width="23.80" height="23.60" rx="2.5" fill="#C4002F"/><path d="M144.2,27.3 H146.9 V37.4 H149.6 V38.8 H141.6 V37.4 H144.2 V29.6 L141.8,30.3 V29 Z" fill="#fff"/><rect x="1283.80" y="24.60" width="40.10" height="39.60" rx="5.5" fill="rgba(0,0,0,0.7)" filter="url(#blur)"/><rect x="1284.00" y="24.00" width="38.90" height="38.40" rx="5" fill="#fff"/><rect x="1287.50" y="27.20" width="31.70" height="31.40" rx="2.5" fill="#C4002F"/><path d="M298.3,39 Q299.5,36.9 303.3,36.9 Q308.9,36.9 308.9,40.8 Q308.9,43 306,45.3 L298.6,50.3 H309.7" transform="translate(1000,0)" fill="none" stroke="#fff" stroke-width="1.7"/><rect x="1423.50" y="256.00" width="39.70" height="39.10" rx="5.5" fill="rgba(0,0,0,0.7)" filter="url(#blur)"/><rect x="1423.70" y="255.40" width="38.50" height="37.90" rx="5" fill="#fff"/><rect x="1427.30" y="259.00" width="30.70" height="31.00" rx="2.5" fill="#C4002F"/><path d="M1437.6,269.8 Q1437.9,268.3 1440,268.3 H1446 Q1448.2,268.3 1448.2,270.5 V272.8 Q1448.2,275 1446,275 H1441.2 M1446,275 Q1448.2,275 1448.2,277.2 V279.5 Q1448.2,281.7 1446,281.7 H1440 Q1437.9,281.7 1437.6,280.2" fill="none" stroke="#fff" stroke-width="1.6"/></svg>
</body></html>
